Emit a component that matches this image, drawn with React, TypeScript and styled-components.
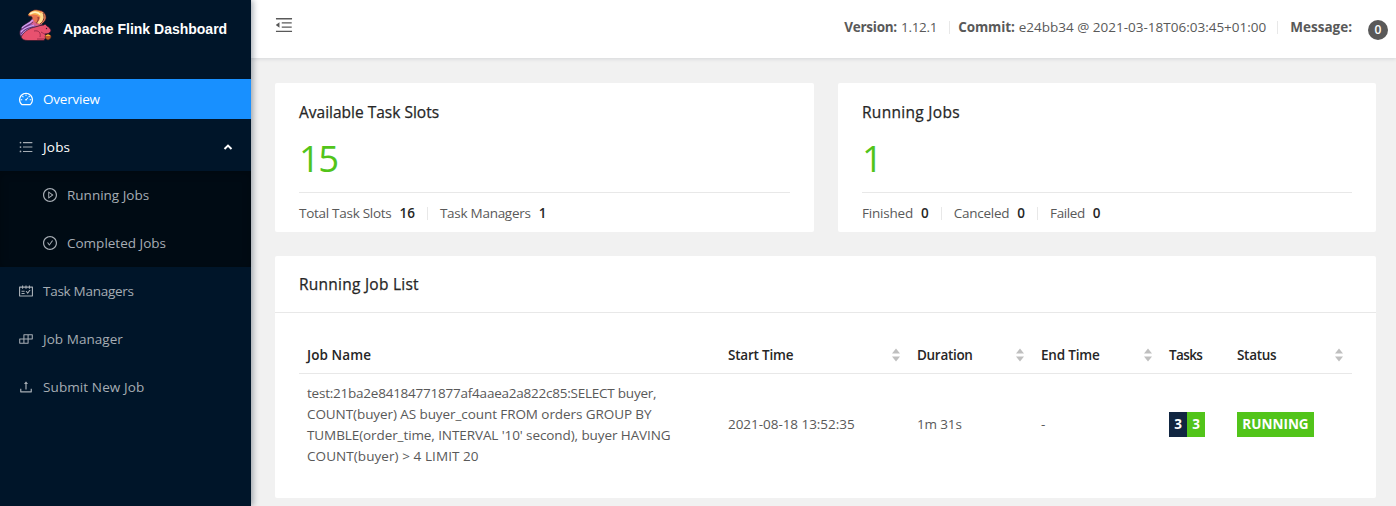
import React from "react";
import styled, { createGlobalStyle } from "styled-components";
import {
  AiOutlineDashboard,
  AiOutlineBars,
  AiOutlinePlayCircle,
  AiOutlineCheckCircle,
  AiOutlineSchedule,
  AiOutlineBuild,
  AiOutlineUpload,
  AiOutlineMenuFold,
} from "react-icons/ai";

const GlobalStyle = createGlobalStyle`
  * { box-sizing: border-box; }
  body {
    margin: 0;
    background: #f1f1f1;
    font-family: "Open Sans", "Noto Sans", sans-serif;
    font-size: 13.5px;
    line-height: 21px;
    color: #595959;
    overflow: hidden;
  }
`;

const Text = styled.span<{ $ls?: number }>`
  white-space: nowrap;
  letter-spacing: ${(p) => p.$ls ?? 0}px;
`;

const Layout = styled.div`
  display: flex;
  width: 1396px;
  height: 506px;
  overflow: hidden;
`;

const Sidebar = styled.aside`
  flex: 0 0 251px;
  height: 506px;
  background: #001529;
  box-shadow: 2px 0 6px rgba(0, 21, 41, 0.35);
  position: relative;
  z-index: 2;
`;

const Brand = styled.div`
  display: flex;
  align-items: center;
  height: 58px;
  margin-bottom: 17px;
  padding-left: 18px;
`;

const BrandLogo = styled.svg`
  width: 34px;
  height: 34px;
  margin: 0 11px 8px 0;
`;

const BrandName = styled.h1`
  margin: 0;
  color: #fff;
  font: bold 14px/20px "Liberation Sans", Arial, sans-serif;
  white-space: nowrap;
`;

const Menu = styled.nav`
  display: flex;
  flex-direction: column;
`;

const MenuItem = styled.a<{ $active?: boolean; $open?: boolean; $nested?: boolean }>`
  display: flex;
  flex: none;
  align-items: center;
  height: 40px;
  margin: 4px 0;
  padding: 0 18px 0 ${(p) => (p.$nested ? 43 : 19)}px;
  color: ${(p) => (p.$active || p.$open ? "#fff" : "#a6adb4")};
  background: ${(p) => (p.$active ? "#1890ff" : "transparent")};

  svg {
    flex: none;
  }
  > svg:first-child {
    width: 14px;
    height: 14px;
    margin-right: 10px;
    color: ${(p) => (p.$active ? "#fff" : "#a6adb4")};
  }
`;

const SubMenu = styled.div`
  display: flex;
  flex-direction: column;
  height: 96px;
  background: #000b14;
  box-shadow: inset 0 2px 8px rgba(0, 0, 0, 0.25);
`;

const Arrow = styled.svg`
  width: 10px;
  height: 8px;
  margin-left: auto;
`;

const Main = styled.main`
  flex: 1;
  min-width: 0;
`;

const Header = styled.header`
  display: flex;
  align-items: center;
  height: 58px;
  padding: 0 8px 4px 24px;
  background: #fff;
  box-shadow: 0 1px 4px rgba(0, 21, 41, 0.12);
  position: relative;

  > svg {
    width: 18px;
    height: 18px;
    margin-bottom: 4px;
  }
`;

const Info = styled.div`
  display: flex;
  align-items: center;
  margin-left: auto;
`;

const Label = styled(Text)`
  font-weight: 700;
`;

const Value = styled(Text)`
  margin-left: 4px;
`;

const Separator = styled.i<{ $left: number; $right: number }>`
  width: 1px;
  height: 13px;
  margin: 1px ${(p) => p.$right}px 0 ${(p) => p.$left}px;
  background: #e8e8e8;
`;

const Badge = styled.span`
  width: 20px;
  height: 20px;
  margin: 5px 0 0 16px;
  border-radius: 50%;
  background: #595959;
  color: #fff;
  font-size: 12px;
  font-weight: 600;
  line-height: 20px;
  text-align: center;
`;

const Content = styled.div`
  padding: 25px 20px 0 24px;
`;

const CardRow = styled.div`
  display: grid;
  grid-template-columns: 539px 538px;
  gap: 24px;
`;

const Card = styled.section`
  height: 149px;
  padding: 18px 24px 0;
  background: #fff;
  border-radius: 2px;
`;

const Title = styled.h2`
  margin: 0;
  color: #262626;
  font-size: 15.5px;
  font-weight: 400;
  line-height: 22px;
  -webkit-text-stroke: 0.25px #262626;
`;

const BigNumber = styled.div`
  height: 70px;
  padding-top: 10px;
  border-bottom: 1px solid #e8e8e8;
  color: #52c41a;
  font-size: 36.5px;
  line-height: 50px;
  letter-spacing: -1.5px;
`;

const Stats = styled.div`
  display: flex;
  align-items: center;
  height: 40px;
`;

const StatValue = styled(Text)`
  margin-left: 8px;
  color: #262626;
  font-weight: 600;
`;

const ListCard = styled.section`
  height: 242px;
  margin-top: 24px;
  background: #fff;
  border-radius: 2px;
`;

const ListTitle = styled.div`
  height: 57px;
  padding: 17px 24px 0;
  border-bottom: 1px solid #e8e8e8;
`;

const Table = styled.div`
  padding: 24px 24px 0;
`;

const Row = styled.div<{ $head?: boolean }>`
  display: grid;
  grid-template-columns: 421px 189px 124px 128px 68px 123px;
  align-items: center;
  height: ${(p) => (p.$head ? 37 : 101)}px;
  border-bottom: ${(p) => (p.$head ? "1px solid #e8e8e8" : "0")};
  color: ${(p) => (p.$head ? "#262626" : "inherit")};
  font-weight: ${(p) => (p.$head ? 600 : 400)};
`;

const Cell = styled.div`
  display: flex;
  align-items: center;
  justify-content: space-between;
  padding: 0 9px 0 8px;
`;

const JobName = styled.div`
  display: flex;
  flex-direction: column;
`;

const Sorter = styled.svg`
  width: 8px;
  height: 14px;
  fill: #bfbfbf;
`;

const Tags = styled.div`
  display: flex;
`;

const Tag = styled.span<{ $bg: string; $w: number }>`
  width: ${(p) => p.$w}px;
  height: 25px;
  background: ${(p) => p.$bg};
  color: #fff;
  font-weight: 700;
  line-height: 25px;
  text-align: center;
`;

const Squirrel = () => (
  <BrandLogo viewBox="0 0 34 34">
    <path d="M10 8C11 3 16 1 20 2c5 0 9 4 8 9-1 3-4 5-6 6L11 18c3-3 3-6 3-9z" fill="#e8744f" stroke="#211827" strokeWidth=".7" />
    <path d="M10 7c3-5 10-6 14-2 2 2 0 4-2 4-3-3-7-3-12-2z" fill="#f7b04a" />
    <path d="M12 6c4-3 8-2 11 1" fill="none" stroke="#fff0be" strokeWidth="1.8" />
    <path d="M24 4c4 3 3 8-1 12l-4-1c3-3 4-6 3-9z" fill="#ffd98a" />
    <path d="M25 5c2 4 1 8-3 11M20 9c1 3-1 6-4 8" fill="none" stroke="#7b302c" strokeWidth="1" />
    <path d="M13 9c2 4-4 5-8 9-4 4-4 8-2 11l8 2 4-10 8-4c-5 0-8-3-10-8z" fill="#9a5cb8" stroke="#211827" strokeWidth=".8" />
    <path d="M15 11c2 5 6 6 10 5-4 3-9 2-12 0-2-1-1-3 2-5z" fill="#d9618f" />
    <path d="M4 20c3-4 8-4 11-8M3 24c4-5 9-5 13-7M4 27c3-5 7-6 11-7" fill="none" stroke="#cfa0ee" strokeWidth="1.3" />
    <path d="M3 22c4-4 8-4 12-8M3 26c3-5 8-6 12-7" fill="none" stroke="#442154" strokeWidth=".7" />
    <path d="M3 29c3-6 9-9 14-10 4-1 6-2 9-2l1-1 2 2c2 1 4 3 4 5-1 2-3 3-6 3l1 3-2 3.5H10c-4 0-6-1-7-3.5z" fill="#e8516f" stroke="#2c1526" strokeWidth=".7" />
    <path d="M16 23c5-1 7 2 6 6M23 24c2 1 3 2 5 2M19 31h7" fill="none" stroke="#8b2644" strokeWidth=".8" />
    <circle cx="28.5" cy="20.5" r=".7" fill="#371827" />
    <path d="M27 28c2-2 4-2 6 0 0 2-1 3-3 4-2-1-3-2-3-4z" fill="#c25a2c" stroke="#6e321d" strokeWidth=".6" />
    <path d="M27.500 28c1-2 4-2 5 0z" fill="#f5b93c" />
  </BrandLogo>
);

const Sort = () => (
  <Sorter viewBox="0 0 8 14">
    <path d="M4 0.5L8 5.5H0zM0 8.5H8L4 13.5z" />
  </Sorter>
);

const iconBox = "64 64 896 896";

const columns = [
  { name: "Job Name", ls: 0.1 },
  { name: "Start Time", ls: -0.2, sort: true },
  { name: "Duration", ls: -0.3, sort: true },
  { name: "End Time", ls: -0.2, sort: true },
  { name: "Tasks", ls: -0.6 },
  { name: "Status", ls: -0.3, sort: true },
];

const jobLines = [
  { text: "test:21ba2e84184771877af4aaea2a822c85:SELECT buyer,", ls: -0.23 },
  { text: "COUNT(buyer) AS buyer_count FROM orders GROUP BY", ls: -0.08 },
  { text: "TUMBLE(order_time, INTERVAL '10' second), buyer HAVING", ls: -0.09 },
  { text: "COUNT(buyer) > 4 LIMIT 20", ls: 0.07 },
];

export default function App() {
  return (
    <>
      <GlobalStyle />
      <Layout>
        <Sidebar>
          <Brand>
            <Squirrel />
            <BrandName>Apache Flink Dashboard</BrandName>
          </Brand>
          <Menu>
            <MenuItem $active>
              <AiOutlineDashboard viewBox={iconBox} />
              <Text $ls={-0.22}>Overview</Text>
            </MenuItem>
            <MenuItem $open>
              <AiOutlineBars viewBox={iconBox} />
              <Text $ls={0.2}>Jobs</Text>
              <Arrow viewBox="0 0 10 8">
                <path d="M1.5 6L5 2.6L8.5 6" fill="none" stroke="currentColor" strokeWidth="2" />
              </Arrow>
            </MenuItem>
            <SubMenu>
              <MenuItem $nested>
                <AiOutlinePlayCircle viewBox={iconBox} />
                <Text>Running Jobs</Text>
              </MenuItem>
              <MenuItem $nested>
                <AiOutlineCheckCircle viewBox={iconBox} />
                <Text>Completed Jobs</Text>
              </MenuItem>
            </SubMenu>
            <MenuItem>
              <AiOutlineSchedule viewBox={iconBox} />
              <Text $ls={-0.27}>Task Managers</Text>
            </MenuItem>
            <MenuItem>
              <AiOutlineBuild viewBox={iconBox} />
              <Text $ls={0.05}>Job Manager</Text>
            </MenuItem>
            <MenuItem>
              <AiOutlineUpload viewBox={iconBox} />
              <Text $ls={0.1}>Submit New Job</Text>
            </MenuItem>
          </Menu>
        </Sidebar>
        <Main>
          <Header>
            <AiOutlineMenuFold viewBox={iconBox} />
            <Info>
              <Label $ls={-0.25}>Version:</Label>
              <Value $ls={-0.3}>1.12.1</Value>
              <Separator $left={12} $right={8} />
              <Label $ls={-0.1}>Commit:</Label>
              <Value>e24bb34 @ 2021-03-18T06:03:45+01:00</Value>
              <Separator $left={11} $right={12} />
              <Label>Message:</Label>
              <Badge>0</Badge>
            </Info>
          </Header>
          <Content>
            <CardRow>
              <Card>
                <Title><Text>Available Task Slots</Text></Title>
                <BigNumber>15</BigNumber>
                <Stats>
                  <Text $ls={-0.28}>Total Task Slots</Text>
                  <StatValue>16</StatValue>
                  <Separator $left={12} $right={12} />
                  <Text $ls={-0.27}>Task Managers</Text>
                  <StatValue>1</StatValue>
                </Stats>
              </Card>
              <Card>
                <Title><Text $ls={0.3}>Running Jobs</Text></Title>
                <BigNumber>1</BigNumber>
                <Stats>
                  <Text $ls={-0.2}>Finished</Text>
                  <StatValue>0</StatValue>
                  <Separator $left={12} $right={12} />
                  <Text $ls={-0.25}>Canceled</Text>
                  <StatValue>0</StatValue>
                  <Separator $left={12} $right={12} />
                  <Text $ls={-0.4}>Failed</Text>
                  <StatValue>0</StatValue>
                </Stats>
              </Card>
            </CardRow>
            <ListCard>
              <ListTitle>
                <Title><Text $ls={0.25}>Running Job List</Text></Title>
              </ListTitle>
              <Table>
                <Row $head>
                  {columns.map((c) => (
                    <Cell key={c.name}>
                      <Text $ls={c.ls}>{c.name}</Text>
                      {c.sort && <Sort />}
                    </Cell>
                  ))}
                </Row>
                <Row>
                  <Cell>
                    <JobName>
                      {jobLines.map((l) => (
                        <Text key={l.text} $ls={l.ls}>{l.text}</Text>
                      ))}
                    </JobName>
                  </Cell>
                  <Cell><Text $ls={-0.04}>2021-08-18 13:52:35</Text></Cell>
                  <Cell><Text $ls={-0.15}>1m 31s</Text></Cell>
                  <Cell><Text>-</Text></Cell>
                  <Cell>
                    <Tags>
                      <Tag $bg="#112641" $w={18}>3</Tag>
                      <Tag $bg="#52c41a" $w={18}>3</Tag>
                    </Tags>
                  </Cell>
                  <Cell>
                    <Tag $bg="#52c41a" $w={77}>RUNNING</Tag>
                  </Cell>
                </Row>
              </Table>
            </ListCard>
          </Content>
        </Main>
      </Layout>
    </>
  );
}
